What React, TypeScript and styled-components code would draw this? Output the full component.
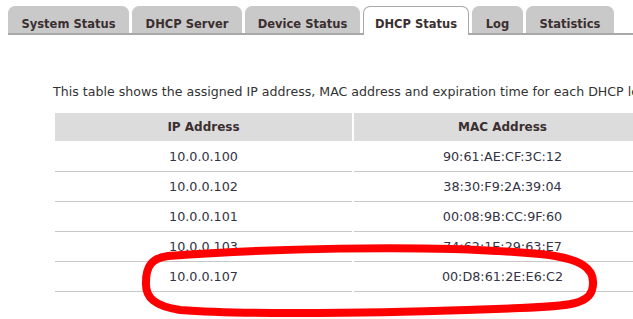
import React from "react";
import styled, { createGlobalStyle } from "styled-components";

const GlobalStyle = createGlobalStyle`
  html, body {
    margin: 0;
    padding: 0;
    background: #ffffff;
  }
  body {
    font-family: "DejaVu Sans", Verdana, sans-serif;
    color: #333333;
    overflow: hidden;
  }
`;

const tabs = [
  { label: "System Status", width: 121 },
  { label: "DHCP Server", width: 110 },
  { label: "Device Status", width: 115 },
  { label: "DHCP Status", width: 106 },
  { label: "Log", width: 51 },
  { label: "Statistics", width: 88 },
];
const activeTab = "DHCP Status";

const leases = [
  { ip: "10.0.0.100", mac: "90:61:AE:CF:3C:12" },
  { ip: "10.0.0.102", mac: "38:30:F9:2A:39:04" },
  { ip: "10.0.0.101", mac: "00:08:9B:CC:9F:60" },
  { ip: "10.0.0.103", mac: "74:62:1E:29:63:E7" },
  { ip: "10.0.0.107", mac: "00:D8:61:2E:E6:C2" },
];

const App: React.FC = () => {
  return (
    <>
      <GlobalStyle />
      <Page>
        <TabBar>
          {tabs.map((t) => (
            <Tab key={t.label} $active={t.label === activeTab} $width={t.width}>
              {t.label}
            </Tab>
          ))}
        </TabBar>
        <Content>
          <Intro>
            This table shows the assigned IP address, MAC address and expiration time for each DHCP lease.
          </Intro>
          <LeaseTable>
            <thead>
              <tr>
                <th>IP Address</th>
                <th>MAC Address</th>
              </tr>
            </thead>
            <tbody>
              {leases.map((l) => (
                <tr key={l.ip}>
                  <td>{l.ip}</td>
                  <td>{l.mac}</td>
                </tr>
              ))}
            </tbody>
          </LeaseTable>
        </Content>
        <Scribble viewBox="0 0 633 319" width="633" height="319">
          <path
            d="M 168 256 C 250 250, 420 243, 540 254 C 580 258, 598 268, 592 290 C 588 304, 570 306, 520 308 C 420 312, 260 316, 180 310 C 155 306, 145 298, 146 282 C 146 266, 152 258, 168 256 Z"
            fill="none"
            stroke="#ff0000"
            strokeWidth="8"
            strokeLinecap="round"
            strokeLinejoin="round"
          />
        </Scribble>
      </Page>
    </>
  );
};

const Page = styled.div`
  position: relative;
  width: 633px;
  height: 319px;
  overflow: hidden;
`;

const TabBar = styled.div`
  display: flex;
  gap: 3px;
  margin: 6px 0 0 8px;
  height: 27px;
  border-bottom: 2px solid #a9a9a9;
  align-items: flex-end;
`;

const Tab = styled.div<{ $active: boolean; $width: number }>`
  width: ${(p) => p.$width}px;
  height: ${(p) => (p.$active ? "29px" : "27px")};
  margin-bottom: ${(p) => (p.$active ? "-2px" : "0")};
  padding-top: 7px;
  padding-bottom: ${(p) => (p.$active ? "2px" : "0")};
  box-sizing: border-box;
  display: flex;
  align-items: center;
  justify-content: center;
  font-size: 11.5px;
  font-weight: bold;
  color: #3b2f30;
  background: ${(p) => (p.$active ? "#ffffff" : "#c9c9c9")};
  border: 1px solid ${(p) => (p.$active ? "#a9a9a9" : "#c9c9c9")};
  border-bottom: none;
  border-radius: 7px 7px 0 0;
  white-space: nowrap;
`;

const Content = styled.div`
  padding: 49px 0 0 53px;
`;

const Intro = styled.p`
  margin: 0;
  font-size: 12.6px;
  line-height: 15px;
  white-space: nowrap;
  color: #333333;
`;

const LeaseTable = styled.table`
  margin-top: 14px;
  border-collapse: separate;
  border-spacing: 2px 0;
  table-layout: fixed;
  width: 600px;

  th {
    width: 297px;
    height: 28px;
    padding: 0;
    background: #dcdcdc;
    color: #3b2f30;
    font-size: 12px;
    font-weight: bold;
    text-align: center;
    border-bottom: 1px solid #ffffff;
  }

  td {
    height: 29px;
    padding: 0;
    text-align: center;
    font-size: 12.75px;
    color: #333344;
    border-bottom: 1px solid #c8c8c8;
  }
`;

const Scribble = styled.svg`
  position: absolute;
  left: 0;
  top: 0;
  pointer-events: none;
`;

export default App;
